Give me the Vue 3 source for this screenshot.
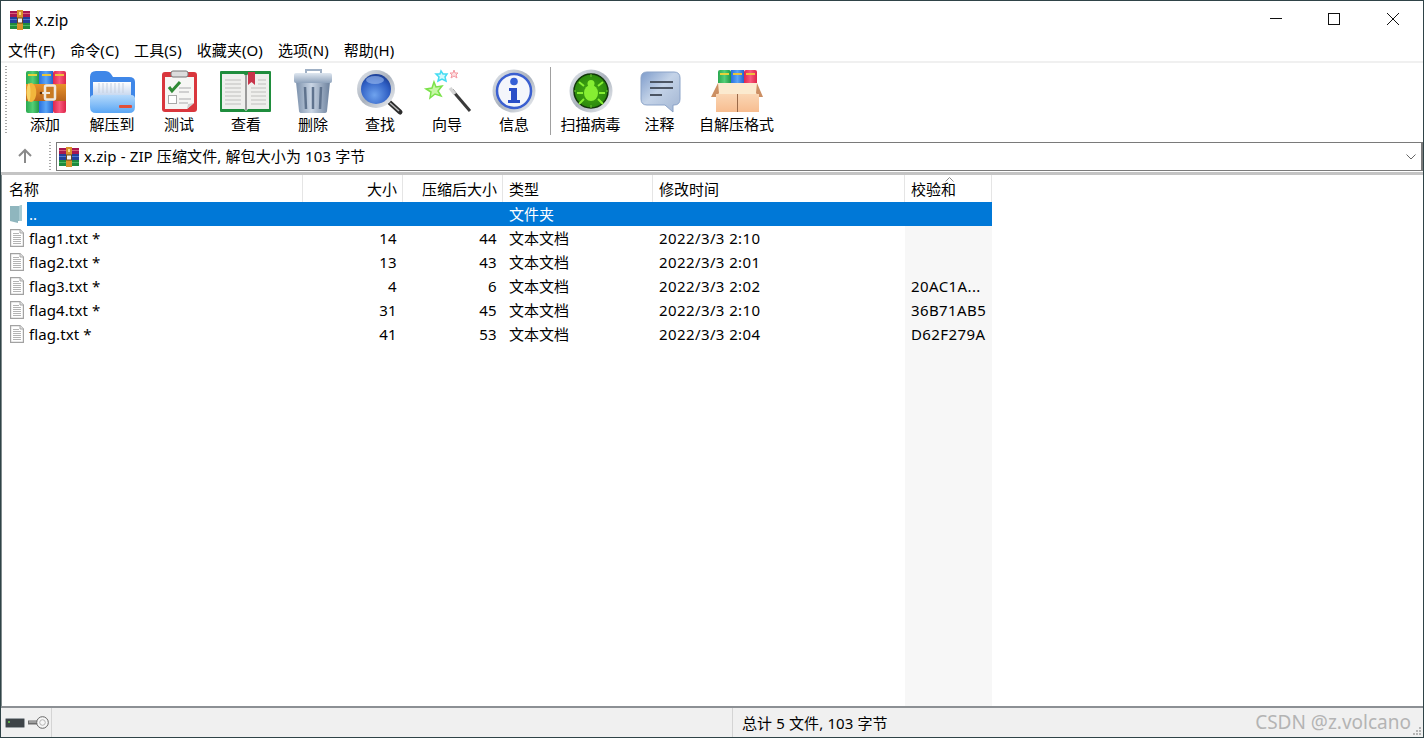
<script setup>
const menus = ['文件(F)', '命令(C)', '工具(S)', '收藏夹(O)', '选项(N)', '帮助(H)']
const rows = [
  { name: 'flag1.txt *', size: '14', packed: '44', type: '文本文档', time: '2022/3/3 2:10', crc: '' },
  { name: 'flag2.txt *', size: '13', packed: '43', type: '文本文档', time: '2022/3/3 2:01', crc: '' },
  { name: 'flag3.txt *', size: '4', packed: '6', type: '文本文档', time: '2022/3/3 2:02', crc: '20AC1A...' },
  { name: 'flag4.txt *', size: '31', packed: '45', type: '文本文档', time: '2022/3/3 2:10', crc: '36B71AB5' },
  { name: 'flag.txt *', size: '41', packed: '53', type: '文本文档', time: '2022/3/3 2:04', crc: 'D62F279A' }
]
</script>

<template>
  <div class="win">
    <svg class="defs" width="0" height="0">
      <defs>
        <symbol id="rar" viewBox="0 0 20 20">
          <rect x="0" y="1" width="20" height="6" fill="#a8174f" />
          <rect x="0" y="7" width="20" height="6" fill="#21409c" />
          <rect x="0" y="13" width="20" height="6" fill="#1f8a3e" />
          <rect x="0" y="3" width="20" height="1" fill="#d95f7b" />
          <rect x="0" y="9" width="20" height="1" fill="#4d77d0" />
          <rect x="0" y="15" width="20" height="1" fill="#49b864" />
          <rect x="7" y="0" width="6" height="20" fill="#d9932b" />
          <rect x="7.500" y="8" width="5" height="5" fill="#f3f3f3" stroke="#6b4a1c" stroke-width="1" />
          <rect x="9" y="2" width="2" height="3" fill="#f6dc8e" />
        </symbol>
        <symbol id="txt" viewBox="0 0 14 18">
          <path d="M.6.6H10L13.400 4V17.400H.6Z" fill="#fff" stroke="#a2a2a2" stroke-width="1.200" />
          <path d="M10 .6V4H13.400" fill="#e4e4e4" stroke="#a8a8a8" />
          <path d="M3 4.500H9M3 6.500H11M3 8.500H11M3 10.500H11M3 12.500H11M3 14.500H11" stroke="#b4b4b4" stroke-width="1" />
        </symbol>
        <linearGradient id="gFront" x1="0" y1="0" x2="0" y2="1">
          <stop offset="0" stop-color="#b4d9fb" />
          <stop offset="1" stop-color="#5aa6f4" />
        </linearGradient>
        <linearGradient id="gPaper" x1="0" y1="0" x2="0" y2="1">
          <stop offset="0" stop-color="#ffffff" />
          <stop offset="1" stop-color="#bcd0ec" />
        </linearGradient>
        <linearGradient id="gBelt" x1="0" y1="0" x2="0" y2="1">
          <stop offset="0" stop-color="#e8922a" />
          <stop offset="1" stop-color="#b9651b" />
        </linearGradient>
        <linearGradient id="gGreen" x1="0" y1="0" x2="1" y2="0">
          <stop offset="0" stop-color="#2aa84f" />
          <stop offset=".5" stop-color="#53cf77" />
          <stop offset="1" stop-color="#1f9443" />
        </linearGradient>
        <linearGradient id="gBlue" x1="0" y1="0" x2="1" y2="0">
          <stop offset="0" stop-color="#2a6fde" />
          <stop offset=".5" stop-color="#5aa6f6" />
          <stop offset="1" stop-color="#2463cc" />
        </linearGradient>
        <linearGradient id="gRed" x1="0" y1="0" x2="1" y2="0">
          <stop offset="0" stop-color="#e0264c" />
          <stop offset=".5" stop-color="#f9597d" />
          <stop offset="1" stop-color="#dc2448" />
        </linearGradient>
        <linearGradient id="gSteel" x1="0" y1="0" x2="1" y2="0">
          <stop offset="0" stop-color="#7d92ad" />
          <stop offset=".45" stop-color="#c9d5e4" />
          <stop offset="1" stop-color="#6d829e" />
        </linearGradient>
        <linearGradient id="gLid" x1="0" y1="0" x2="0" y2="1">
          <stop offset="0" stop-color="#dfe7f0" />
          <stop offset="1" stop-color="#8ea2bb" />
        </linearGradient>
        <radialGradient id="gLens" cx=".45" cy=".7" r=".7">
          <stop offset="0" stop-color="#6fa3ee" />
          <stop offset=".7" stop-color="#2f5fc4" />
          <stop offset="1" stop-color="#1d3f96" />
        </radialGradient>
        <linearGradient id="gRing" x1="0" y1="0" x2="1" y2="1">
          <stop offset="0" stop-color="#e4e8ee" />
          <stop offset=".5" stop-color="#aab2bd" />
          <stop offset="1" stop-color="#f1f3f6" />
        </linearGradient>
        <linearGradient id="gBubble" x1="0" y1="0" x2="1" y2="1">
          <stop offset="0" stop-color="#7e9ccb" />
          <stop offset=".45" stop-color="#c4d3e8" />
          <stop offset="1" stop-color="#a2b5d2" />
        </linearGradient>
        <radialGradient id="gBug" cx=".5" cy=".5" r=".5">
          <stop offset="0" stop-color="#45a814" />
          <stop offset="1" stop-color="#2b8a0c" />
        </radialGradient>
        <linearGradient id="gBox" x1="0" y1="0" x2="0" y2="1">
          <stop offset="0" stop-color="#fad6b4" />
          <stop offset="1" stop-color="#f7bd90" />
        </linearGradient>
      </defs>
    </svg>

    <header class="title">
      <svg class="rar" width="20" height="20"><use href="#rar" /></svg>
      <span class="title-text">x.zip</span>
      <div class="controls">
        <button class="ctl">
          <svg width="14" height="14" viewBox="0 0 14 14"><path d="M2 6.500H14" stroke="#111" fill="none" /></svg>
        </button>
        <button class="ctl">
          <svg width="14" height="14" viewBox="0 0 14 14"><rect x="1.500" y="1.500" width="11" height="11" stroke="#111" fill="none" /></svg>
        </button>
        <button class="ctl">
          <svg width="14" height="14" viewBox="0 0 14 14"><path d="M1 1L13 13M13 1L1 13" stroke="#111" fill="none" /></svg>
        </button>
      </div>
    </header>

    <nav class="menu">
      <span v-for="m in menus" :key="m" class="menu-item">{{ m }}</span>
    </nav>

    <section class="toolbar">
      <i class="grip"></i>

      <div class="tool">
        <svg class="ico" width="54" height="48" viewBox="0 0 54 48">
          <rect x="8" y="3" width="13.500" height="42" rx="2" fill="url(#gGreen)" />
          <rect x="21" y="3" width="14" height="42" fill="url(#gBlue)" />
          <rect x="35" y="3" width="13" height="42" rx="2" fill="url(#gRed)" />
          <rect x="10" y="6" width="9" height="2" fill="#e8d23a" />
          <rect x="24" y="6" width="9" height="2" fill="#e8c53a" />
          <rect x="37" y="6" width="9" height="2" fill="#f0c03a" />
          <rect x="8" y="16" width="40" height="17" fill="url(#gBelt)" />
          <path d="M13 15C7 16 7 33 13 34C20 33 20 16 13 15Z" fill="#f2b63c" />
          <path d="M11 15C8 17 8 32 11 34C13 31 13 18 11 15Z" fill="#f8d468" />
          <rect x="27" y="17.500" width="10" height="14" rx="1.500" fill="#c87a22" stroke="#efe9dd" stroke-width="2.500" />
          <rect x="24" y="24" width="8" height="2" fill="#efe9dd" />
          <circle cx="23" cy="25" r="1.300" fill="#5a2f0c" />
        </svg>
        <span>添加</span>
      </div>

      <div class="tool">
        <svg class="ico" width="54" height="48" viewBox="0 0 54 48">
          <path d="M5 9Q5 3 11 3H20Q24 3 26 6L28 9H44Q50 9 50 14V30H5Z" fill="#3f87e8" />
          <rect x="8" y="14" width="38" height="16" fill="url(#gPaper)" />
          <path d="M14 15V25M18 15V25M22 15V25M26 15V25M30 15V25M34 15V25M38 15V25" stroke="#c5cfdf" stroke-width="1" />
          <path d="M5 31Q5 27 9 27H46Q50 27 50 31V39Q50 45 44 45H11Q5 45 5 39Z" fill="url(#gFront)" />
          <rect x="34" y="37" width="13" height="3" rx="1" fill="#e2503a" />
        </svg>
        <span>解压到</span>
      </div>

      <div class="tool">
        <svg class="ico" width="54" height="48" viewBox="0 0 54 48">
          <rect x="10" y="4" width="35" height="40" rx="3" fill="#d9363c" />
          <path d="M13 9H42V35L35 41H13Z" fill="#f6f6f4" />
          <path d="M35 41L42 35L36 36Z" fill="#cfcfcf" />
          <rect x="19" y="3" width="17" height="6" rx="2" fill="#dcdcdc" stroke="#777" stroke-width="1" />
          <path d="M17 19L20 23L28 14" fill="none" stroke="#2f8a35" stroke-width="3" />
          <path d="M27 20H39M27 24H37M27 31H39M27 35H36" stroke="#c4c4c4" stroke-width="1.500" />
          <rect x="16.500" y="27.500" width="8" height="8" fill="#fff" stroke="#a8a8a8" />
        </svg>
        <span>测试</span>
      </div>

      <div class="tool">
        <svg class="ico" width="54" height="48" viewBox="0 0 54 48">
          <rect x="1" y="3" width="51" height="41" rx="1" fill="#1f8d3d" />
          <path d="M3 6H25L27 9L29 6H50V41H29L27 43L25 41H3Z" fill="#efefed" />
          <path d="M6 12H22M6 16H22M6 20H22M6 24H22M6 28H22M6 32H22M6 36H22M32 20H47M32 24H47M32 28H47M32 32H47M32 36H47M39 12H47M39 16H47" stroke="#cfcfcd" stroke-width="1.500" />
          <rect x="26" y="7" width="2" height="35" fill="#9a9a9a" />
          <path d="M29 4H36V17L32.500 14L29 17Z" fill="#c7344a" />
        </svg>
        <span>查看</span>
      </div>

      <div class="tool">
        <svg class="ico" width="54" height="48" viewBox="0 0 54 48">
          <path d="M20 6V2H35V6" fill="none" stroke="#9fb0c5" stroke-width="2" />
          <path d="M10 14H44L41 43Q41 45 38 45H16Q13 45 13 43Z" fill="url(#gSteel)" />
          <path d="M19 19L20 41M27 19V41M35 19L34 41" stroke="#5f738e" stroke-width="2.500" />
          <rect x="8" y="5" width="38" height="10" rx="2" fill="url(#gLid)" />
        </svg>
        <span>删除</span>
      </div>

      <div class="tool">
        <svg class="ico" width="54" height="48" viewBox="0 0 54 48">
          <path d="M35 33L47 44" stroke="#2c2c2c" stroke-width="5" stroke-linecap="round" />
          <path d="M37 35L46 43" stroke="#b8b8b8" stroke-width="1.500" />
          <circle cx="23" cy="21" r="19" fill="url(#gRing)" />
          <circle cx="23" cy="21" r="15" fill="url(#gLens)" />
          <ellipse cx="22" cy="12" rx="9" ry="4" fill="#a9c6f4" opacity=".55" />
        </svg>
        <span>查找</span>
      </div>

      <div class="tool">
        <svg class="ico" width="54" height="48" viewBox="0 0 54 48">
          <path d="M32 22L50 43" stroke="#3a3a3a" stroke-width="3" />
          <path d="M30 20L35 26" stroke="#d5d5d5" stroke-width="3.500" />
          <path d="M14 14L16 19L22 18L18 23L21 28L15 26L10 30L11 24L6 21L12 20Z" fill="#c6f7a6" stroke="#7be24a" stroke-width="1.500" />
          <path d="M21 3L23 6L27 6L25 9L26 13L22 11L18 13L19 9L16 6L20 6Z" fill="#d2f8fc" stroke="#44dcf2" stroke-width="1.500" />
          <path d="M34 2L35 5L38 5L36 7L37 10L34 8L31 10L32 7L30 5L33 5Z" fill="#fde0e2" stroke="#f49aa2" stroke-width="1" />
        </svg>
        <span>向导</span>
      </div>

      <div class="tool">
        <svg class="ico" width="54" height="48" viewBox="0 0 54 48">
          <circle cx="27" cy="23" r="21.500" fill="url(#gRing)" />
          <circle cx="27" cy="23" r="17" fill="#f4f6fb" stroke="#3a5fd0" stroke-width="2.500" />
          <circle cx="27" cy="13.500" r="3.800" fill="#3560d6" />
          <path d="M22 20H30V32H33V35H21V32H24V23H22Z" fill="#2a4fc8" />
        </svg>
        <span>信息</span>
      </div>

      <i class="sep"></i>

      <div class="tool scan">
        <svg class="ico" width="54" height="48" viewBox="0 0 54 48">
          <circle cx="27" cy="23" r="21.500" fill="url(#gRing)" />
          <circle cx="27" cy="23" r="17" fill="url(#gBug)" stroke="#12380a" stroke-width="1.500" />
          <ellipse cx="27" cy="25" rx="7" ry="8" fill="#86ee32" />
          <circle cx="27" cy="15.500" r="3.500" fill="#86ee32" />
          <path d="M20 18L15 14M34 18L39 14M19 25H13M35 25H41M20 31L15 36M34 31L39 36" stroke="#86ee32" stroke-width="2" />
          <path d="M27 6V9M27 37V40M10 23H12M42 23H44" stroke="#6cc633" stroke-width="1" />
        </svg>
        <span>扫描病毒</span>
      </div>

      <div class="tool note">
        <svg class="ico" width="54" height="48" viewBox="0 0 54 48">
          <path d="M14 4H41Q47 4 47 10V31Q47 37 41 37H40V44L32 37H14Q8 37 8 31V10Q8 4 14 4Z" fill="url(#gBubble)" stroke="#8ba3c8" stroke-width="1" />
          <path d="M17 14H40M17 20H40M17 27H29" stroke="#4c5563" stroke-width="2" />
        </svg>
        <span>注释</span>
      </div>

      <div class="tool sfx">
        <svg class="ico" width="54" height="48" viewBox="0 0 54 48">
          <rect x="8" y="2" width="13" height="20" rx="2" fill="url(#gGreen)" />
          <rect x="21" y="2" width="13" height="20" fill="url(#gBlue)" />
          <rect x="34" y="2" width="13" height="20" rx="2" fill="url(#gRed)" />
          <rect x="10" y="5" width="9" height="2" fill="#e8d23a" />
          <rect x="23" y="5" width="9" height="2" fill="#e8c53a" />
          <rect x="36" y="5" width="9" height="2" fill="#f0c03a" />
          <path d="M8 15H47L49 26H6Z" fill="#fbeacf" />
          <path d="M8 15L1 29H6L9 25ZM47 15L53 29H49L46 25Z" fill="#cc8f63" />
          <path d="M6 26H49V44H6Z" fill="url(#gBox)" />
          <path d="M27.500 26V44" stroke="#9a6a48" stroke-width="1" />
        </svg>
        <span>自解压格式</span>
      </div>
    </section>

    <section class="addr">
      <div class="up">
        <svg width="16" height="16" viewBox="0 0 16 16"><path d="M8 15V2M2 8L8 2L14 8" fill="none" stroke="#8a8a8a" stroke-width="2" /></svg>
      </div>
      <i class="grip small"></i>
      <div class="path">
        <svg class="rar" width="20" height="20"><use href="#rar" /></svg>
        <span class="path-text">x.zip - ZIP 压缩文件, 解包大小为 103 字节</span>
        <svg class="chev" width="10" height="6" viewBox="0 0 10 6"><path d="M.5 .5L5 5L9.500 .5" fill="none" stroke="#666" /></svg>
      </div>
    </section>

    <main class="list">
      <div class="head">
        <div class="hc">名称</div>
        <div class="hc right">大小</div>
        <div class="hc right">压缩后大小</div>
        <div class="hc">类型</div>
        <div class="hc">修改时间</div>
        <div class="hc crc">
          校验和
          <svg class="caret" width="9" height="5" viewBox="0 0 9 5"><path d="M.5 4.500L4.500 .5L8.500 4.500" fill="none" stroke="#8a8a8a" /></svg>
        </div>
      </div>
      <div class="row">
        <div class="ic">
          <svg width="13" height="18" viewBox="0 0 13 18"><path d="M0 1H9L12 0V16H8V18L0 16Z" fill="#8fb6be" /><path d="M9 1L12 0V16H9Z" fill="#a9cbd2" /></svg>
        </div>
        <div class="cells sel">
          <div class="c first">..</div>
          <div class="c"></div>
          <div class="c"></div>
          <div class="c">文件夹</div>
          <div class="c"></div>
          <div class="c"></div>
        </div>
      </div>
      <div v-for="r in rows" :key="r.name" class="row">
        <div class="ic">
          <svg width="14" height="18"><use href="#txt" /></svg>
        </div>
        <div class="cells">
          <div class="c first">{{ r.name }}</div>
          <div class="c right">{{ r.size }}</div>
          <div class="c right">{{ r.packed }}</div>
          <div class="c">{{ r.type }}</div>
          <div class="c wide">{{ r.time }}</div>
          <div class="c wide">{{ r.crc }}</div>
        </div>
      </div>
    </main>

    <footer class="status">
      <div class="st-icons">
        <svg width="20" height="10" viewBox="0 0 20 10">
          <rect x=".5" y=".5" width="19" height="9" rx="1" fill="#3e4448" stroke="#9aa0a4" />
          <rect x="3" y="3" width="2" height="2" fill="#5fae4a" />
        </svg>
        <svg width="21" height="13" viewBox="0 0 21 13">
          <path d="M0 4.500H11V8.500H0Z" fill="#6d6d6d" />
          <path d="M1 6H10" stroke="#ccc" />
          <circle cx="14.500" cy="6.500" r="5.800" fill="#f7f7f7" stroke="#666" />
          <circle cx="14.500" cy="6.500" r="2.800" fill="none" stroke="#b5b5b5" />
        </svg>
      </div>
      <div class="st-mid"></div>
      <div class="st-text">总计 5 文件, 103 字节</div>
      <div class="st-mark">CSDN @z.volcano</div>
      <svg class="resize" width="9" height="9" viewBox="0 0 9 9">
        <path d="M6 0h2v2H6zM3 3h2v2H3zM6 3h2v2H6zM0 6h2v2H0zM3 6h2v2H3zM6 6h2v2H6z" fill="#b5b5b5" />
      </svg>
    </footer>
  </div>
</template>

<style>
html, body { margin: 0; padding: 0; background: #fff; overflow: hidden; }
</style>

<style scoped>
.win {
  width: 1424px;
  height: 738px;
  box-sizing: border-box;
  display: flex;
  flex-direction: column;
  border: 1px solid #2f4347;
  background: #fff;
  color: #000;
  font: 15px/20px "Noto Sans", "Noto Sans CJK SC", sans-serif;
  overflow: hidden;
}
.defs { display: block; flex: none; }
.title { height: 37px; flex: none; display: flex; align-items: center; padding-left: 9px; }
.rar { flex: none; }
.title-text { margin-left: 5px; font-size: 15.500px; }
.controls { margin-left: auto; display: flex; align-self: stretch; }
.ctl {
  width: 59px;
  border: 0;
  padding: 0 0 1px 22px;
  background: transparent;
  display: flex;
  align-items: center;
  justify-content: flex-start;
}
.menu {
  height: 23px;
  flex: none;
  display: flex;
  align-items: center;
  padding-left: 7px;
  gap: 15px;
  letter-spacing: .08px;
  border-bottom: 2px solid #f0f0f0;
}
.toolbar { height: 78px; flex: none; display: flex; padding-left: 4px; }
.grip {
  flex: none;
  width: 2px;
  margin: 3px 0 6px;
  background: repeating-linear-gradient(#a8a8a8 0 1px, transparent 1px 3px);
}
.tool {
  flex: none;
  width: 67px;
  display: flex;
  flex-direction: column;
  align-items: center;
  padding-top: 5px;
  box-sizing: border-box;
}
.toolbar > .grip + .tool { margin-left: 4.500px; }
.ico { flex: none; }
.tool span { line-height: 18px; white-space: nowrap; margin-top: -1.500px; }
.sep { flex: none; width: 1px; margin: 4px 1px 6px 2px; background: #a0a0a0; }
.tool.scan { width: 78px; }
.tool.note { width: 60px; }
.tool.sfx { width: 94px; }
.addr { height: 31px; flex: none; display: flex; align-items: flex-start; padding-top: 1px; box-sizing: border-box; }
.up { width: 48px; height: 28px; display: flex; align-items: center; justify-content: center; }
.grip.small { margin: 0; height: 28px; width: 2px; }
.path {
  margin-left: 5px;
  flex: 1;
  height: 29px;
  box-sizing: border-box;
  border: 1px solid #7a7a7a;
  border-right-width: 2px;
  display: flex;
  align-items: center;
  padding-left: 2px;
}
.path-text { margin: 0 0 1px 5px; letter-spacing: .12px; }
.chev { margin-left: auto; margin-right: 5px; }
.list {
  flex: 1;
  min-height: 0;
  border-top: 3px solid #c4c4c4;
  background: linear-gradient(#f7f7f7, #f7f7f7) 904px 0 / 87px 100% no-repeat;
  box-shadow: inset 1px 0 0 #7f8a8c;
  overflow: hidden;
}
.head {
  height: 27px;
  width: 991px;
  display: grid;
  grid-template-columns: 302px 100px 100px 150px 252px 87px;
  background: linear-gradient(90deg, #7f8a8c 1px, #fff 1px);
}
.hc {
  position: relative;
  border-right: 1px solid #e5e5e5;
  padding: 4px 6.500px 0 6px;
  box-sizing: border-box;
  white-space: nowrap;
}
.hc:first-child { padding-left: 8px; }
.hc.right { padding-right: 5px; }
.row { height: 24px; width: 991px; display: flex; }
.ic { flex: none; width: 26px; padding: 3px 0 0 9px; box-sizing: border-box; }
.ic svg { display: block; }
.cells {
  flex: 1;
  display: grid;
  grid-template-columns: 276px 100px 100px 150px 252px 87px;
  align-items: center;
}
.sel { background: #0078d7; color: #fff; }
.c { padding: 0 6px; white-space: nowrap; min-width: 0; box-sizing: border-box; }
.first { padding-left: 2px; letter-spacing: .1px; }
.right { text-align: right; padding-right: 6.500px; }
.wide { letter-spacing: .4px; }
.crc { padding-right: 0; }
.caret { position: absolute; left: 40px; top: 2px; }
.status {
  height: 31px;
  flex: none;
  box-sizing: border-box;
  border-top: 2px solid #8c9094;
  background: #f0f0f0;
  display: flex;
  align-items: center;
  position: relative;
}
.st-icons {
  width: 51px;
  align-self: stretch;
  box-sizing: border-box;
  border-right: 1px solid #d4d4d4;
  padding-left: 4px;
  display: flex;
  align-items: center;
  gap: 3px;
}
.st-mid { width: 681px; align-self: stretch; border-right: 1px solid #d4d4d4; box-sizing: border-box; }
.st-text { margin-left: 9px; letter-spacing: .12px; }
.st-mark {
  margin: 0 12px 2px auto;
  color: #b4b4b4;
  font-size: 19px;
  line-height: 22px;
}
.resize { position: absolute; right: 1px; bottom: 1px; }
</style>
